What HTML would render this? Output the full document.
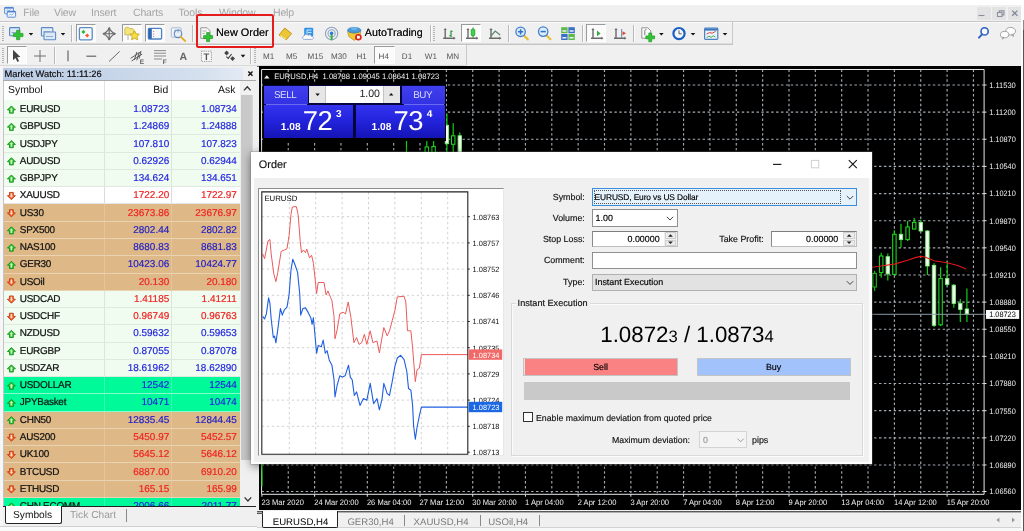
<!DOCTYPE html>
<html lang="en"><head><meta charset="utf-8"><title>MetaTrader 4 - New Order</title>
<style>
*{box-sizing:border-box;margin:0;padding:0}
html,body{width:1024px;height:531px;overflow:hidden}
body{position:relative;background:#f0f0f0;text-rendering:geometricPrecision;font-family:"Liberation Sans",sans-serif;color:#000}
.a{position:absolute}
.t{position:absolute;white-space:nowrap;line-height:1}
.d{-webkit-text-stroke:0.15px currentColor}
svg{position:absolute;left:0;top:0;overflow:visible}
svg text{font-family:"Liberation Sans",sans-serif}
</style></head><body>
<div id="app" class="a" style="left:0;top:0;width:1024px;height:531px;will-change:transform">

<!-- window top -->
<div class="a" style="left:0.00px;top:0.00px;width:1024.00px;height:5.00px;background:#fff"></div>
<div class="a" style="left:1021.00px;top:5.00px;width:3.00px;height:526.00px;background:#fbfbfb"></div>
<div class="a" style="left:1023.00px;top:20.00px;width:1.00px;height:511.00px;background:#8a8a8a"></div>
<div class="a" style="left:1023.00px;top:30.00px;width:1.00px;height:501.00px;background:#555"></div>
<!-- menu bar -->
<div class="t" style="left:23.20px;top:7.97px;font-size:10.5px;color:#a4a4a4;letter-spacing:-0.15px">File</div>
<div class="t" style="left:54.00px;top:7.97px;font-size:10.5px;color:#a4a4a4;letter-spacing:-0.15px">View</div>
<div class="t" style="left:91.00px;top:7.97px;font-size:10.5px;color:#a4a4a4;letter-spacing:-0.15px">Insert</div>
<div class="t" style="left:133.00px;top:7.97px;font-size:10.5px;color:#a4a4a4;letter-spacing:-0.15px">Charts</div>
<div class="t" style="left:178.50px;top:7.97px;font-size:10.5px;color:#a4a4a4;letter-spacing:-0.15px">Tools</div>
<div class="t" style="left:219.00px;top:7.97px;font-size:10.5px;color:#a4a4a4;letter-spacing:-0.15px">Window</div>
<div class="t" style="left:273.00px;top:7.97px;font-size:10.5px;color:#a4a4a4;letter-spacing:-0.15px">Help</div>
<svg width="1024" height="531" viewBox="0 0 1024 531">
<g fill="#f4f8fd" stroke="#5b8fd6" stroke-width="1">
<rect x="4.6" y="7.4" width="8.8" height="6.4" rx="0.6"/>
<path d="M4.6 8h8.8" stroke="#3f78c8" stroke-width="1.2"/>
<path d="M6.4 10.6l1.4-1 1.2 1 1.6-1.2" fill="none" stroke-width="0.7"/>
<rect x="7.2" y="11.2" width="8.4" height="6" rx="0.6"/>
<path d="M7.2 11.8h8.4" stroke="#3f78c8" stroke-width="1.2"/>
</g>
<path d="M9 15.4l1.4-1.4 1.4 1.2 1.8-1.6" fill="none" stroke="#5b8fd6" stroke-width="0.7"/>
</svg>
<div class="a" style="left:976.80px;top:7.00px;width:13.80px;height:13.40px;background:#e3e3e3"></div>
<div class="a" style="left:992.20px;top:7.00px;width:13.80px;height:13.40px;background:#e3e3e3"></div>
<div class="a" style="left:1007.50px;top:7.00px;width:13.60px;height:13.40px;background:#e3e3e3"></div>
<svg width="1024" height="531" viewBox="0 0 1024 531">
<g stroke="#8a8fa0" fill="none" stroke-width="1.1">
<path d="M978.5 15.5h6"/>
<path d="M997.5 12.5h4.5v4h-4.5zM999.3 12.5v-1.6h4.6v4h-1.9"/>
<path d="M1012.2 10.6l5.2 5.2M1017.4 10.6l-5.2 5.2" stroke="#7f8696" stroke-width="1.3"/>
</g></svg>
<div class="a" style="left:0.00px;top:21.00px;width:1021.00px;height:1.00px;background:#c6c6c6"></div>
<div class="a" style="left:0.00px;top:22.00px;width:1021.00px;height:1.00px;background:#fafafa"></div>
<div class="a" style="left:0.00px;top:43.20px;width:733.00px;height:1.00px;background:#dcdcdc"></div>
<div class="a" style="left:0.00px;top:44.20px;width:733.00px;height:1.00px;background:#c4c4c4"></div>
<div class="a" style="left:0.00px;top:45.20px;width:466.00px;height:1.00px;background:#fafafa"></div>
<div class="a" style="left:0.00px;top:65.00px;width:466.00px;height:1.00px;background:#dadada"></div>
<div class="a" style="left:0.00px;top:66.00px;width:257.00px;height:1.40px;background:#fbfbfb"></div>
<div class="a" style="left:732.00px;top:22.00px;width:1.00px;height:22.00px;background:#c8c8c8"></div>
<div class="a" style="left:465.50px;top:45.00px;width:1.00px;height:20.00px;background:#c8c8c8"></div>
<div class="a" style="left:2.00px;top:25.50px;width:2.40px;height:1.00px;background:#b4b4b4"></div><div class="a" style="left:2.00px;top:27.50px;width:2.40px;height:1.00px;background:#b4b4b4"></div><div class="a" style="left:2.00px;top:29.50px;width:2.40px;height:1.00px;background:#b4b4b4"></div><div class="a" style="left:2.00px;top:31.50px;width:2.40px;height:1.00px;background:#b4b4b4"></div><div class="a" style="left:2.00px;top:33.50px;width:2.40px;height:1.00px;background:#b4b4b4"></div><div class="a" style="left:2.00px;top:35.50px;width:2.40px;height:1.00px;background:#b4b4b4"></div><div class="a" style="left:2.00px;top:37.50px;width:2.40px;height:1.00px;background:#b4b4b4"></div><div class="a" style="left:2.00px;top:39.50px;width:2.40px;height:1.00px;background:#b4b4b4"></div>
<div class="a" style="left:433.00px;top:25.50px;width:2.40px;height:1.00px;background:#b4b4b4"></div><div class="a" style="left:433.00px;top:27.50px;width:2.40px;height:1.00px;background:#b4b4b4"></div><div class="a" style="left:433.00px;top:29.50px;width:2.40px;height:1.00px;background:#b4b4b4"></div><div class="a" style="left:433.00px;top:31.50px;width:2.40px;height:1.00px;background:#b4b4b4"></div><div class="a" style="left:433.00px;top:33.50px;width:2.40px;height:1.00px;background:#b4b4b4"></div><div class="a" style="left:433.00px;top:35.50px;width:2.40px;height:1.00px;background:#b4b4b4"></div><div class="a" style="left:433.00px;top:37.50px;width:2.40px;height:1.00px;background:#b4b4b4"></div><div class="a" style="left:433.00px;top:39.50px;width:2.40px;height:1.00px;background:#b4b4b4"></div>
<div class="a" style="left:2.00px;top:47.50px;width:2.40px;height:1.00px;background:#b4b4b4"></div><div class="a" style="left:2.00px;top:49.50px;width:2.40px;height:1.00px;background:#b4b4b4"></div><div class="a" style="left:2.00px;top:51.50px;width:2.40px;height:1.00px;background:#b4b4b4"></div><div class="a" style="left:2.00px;top:53.50px;width:2.40px;height:1.00px;background:#b4b4b4"></div><div class="a" style="left:2.00px;top:55.50px;width:2.40px;height:1.00px;background:#b4b4b4"></div><div class="a" style="left:2.00px;top:57.50px;width:2.40px;height:1.00px;background:#b4b4b4"></div><div class="a" style="left:2.00px;top:59.50px;width:2.40px;height:1.00px;background:#b4b4b4"></div><div class="a" style="left:2.00px;top:61.50px;width:2.40px;height:1.00px;background:#b4b4b4"></div>
<div class="a" style="left:253.50px;top:47.50px;width:2.40px;height:1.00px;background:#b4b4b4"></div><div class="a" style="left:253.50px;top:49.50px;width:2.40px;height:1.00px;background:#b4b4b4"></div><div class="a" style="left:253.50px;top:51.50px;width:2.40px;height:1.00px;background:#b4b4b4"></div><div class="a" style="left:253.50px;top:53.50px;width:2.40px;height:1.00px;background:#b4b4b4"></div><div class="a" style="left:253.50px;top:55.50px;width:2.40px;height:1.00px;background:#b4b4b4"></div><div class="a" style="left:253.50px;top:57.50px;width:2.40px;height:1.00px;background:#b4b4b4"></div><div class="a" style="left:253.50px;top:59.50px;width:2.40px;height:1.00px;background:#b4b4b4"></div><div class="a" style="left:253.50px;top:61.50px;width:2.40px;height:1.00px;background:#b4b4b4"></div>
<div class="a" style="left:71.20px;top:25.00px;width:1.00px;height:17.00px;background:#b9b9b9"></div><div class="a" style="left:72.20px;top:25.00px;width:1.00px;height:17.00px;background:#fbfbfb"></div>
<div class="a" style="left:192.20px;top:25.00px;width:1.00px;height:17.00px;background:#b9b9b9"></div><div class="a" style="left:193.20px;top:25.00px;width:1.00px;height:17.00px;background:#fbfbfb"></div>
<div class="a" style="left:429.60px;top:25.00px;width:1.00px;height:17.00px;background:#b9b9b9"></div><div class="a" style="left:430.60px;top:25.00px;width:1.00px;height:17.00px;background:#fbfbfb"></div>
<div class="a" style="left:508.40px;top:25.00px;width:1.00px;height:17.00px;background:#b9b9b9"></div><div class="a" style="left:509.40px;top:25.00px;width:1.00px;height:17.00px;background:#fbfbfb"></div>
<div class="a" style="left:582.40px;top:25.00px;width:1.00px;height:17.00px;background:#b9b9b9"></div><div class="a" style="left:583.40px;top:25.00px;width:1.00px;height:17.00px;background:#fbfbfb"></div>
<div class="a" style="left:633.20px;top:25.00px;width:1.00px;height:17.00px;background:#b9b9b9"></div><div class="a" style="left:634.20px;top:25.00px;width:1.00px;height:17.00px;background:#fbfbfb"></div>
<div class="a" style="left:54.00px;top:47.00px;width:1.00px;height:17.00px;background:#b9b9b9"></div><div class="a" style="left:55.00px;top:47.00px;width:1.00px;height:17.00px;background:#fbfbfb"></div>
<div class="a" style="left:250.20px;top:47.00px;width:1.00px;height:17.00px;background:#b9b9b9"></div><div class="a" style="left:251.20px;top:47.00px;width:1.00px;height:17.00px;background:#fbfbfb"></div>
<div class="a" style="left:76.00px;top:24.20px;width:19.80px;height:18.20px;background:#fbfbfb;border-left:1px solid #9a9a9a;border-top:1px solid #9a9a9a;border-right:1px solid #fff;border-bottom:1px solid #fff"></div>
<div class="a" style="left:122.00px;top:24.20px;width:20.40px;height:18.20px;background:#fbfbfb;border-left:1px solid #9a9a9a;border-top:1px solid #9a9a9a;border-right:1px solid #fff;border-bottom:1px solid #fff"></div>
<div class="a" style="left:145.20px;top:24.20px;width:20.20px;height:18.20px;background:#fbfbfb;border-left:1px solid #9a9a9a;border-top:1px solid #9a9a9a;border-right:1px solid #fff;border-bottom:1px solid #fff"></div>
<div class="a" style="left:461.20px;top:24.20px;width:20.20px;height:18.20px;background:#fbfbfb;border-left:1px solid #9a9a9a;border-top:1px solid #9a9a9a;border-right:1px solid #fff;border-bottom:1px solid #fff"></div>
<div class="a" style="left:586.20px;top:24.20px;width:20.20px;height:18.20px;background:#fbfbfb;border-left:1px solid #9a9a9a;border-top:1px solid #9a9a9a;border-right:1px solid #fff;border-bottom:1px solid #fff"></div>
<div class="a" style="left:7.00px;top:46.40px;width:20.20px;height:18.00px;background:#fbfbfb;border-left:1px solid #9a9a9a;border-top:1px solid #9a9a9a;border-right:1px solid #fff;border-bottom:1px solid #fff"></div>
<div class="a" style="left:374.20px;top:46.40px;width:20.40px;height:18.00px;background:#fbfbfb;border-left:1px solid #9a9a9a;border-top:1px solid #9a9a9a;border-right:1px solid #fff;border-bottom:1px solid #fff"></div>
<!-- toolbar icons -->
<svg width="1024" height="531" viewBox="0 0 1024 531">
<rect x="9.6" y="27.6" width="10" height="8.2" rx="0.8" fill="#dfeaf6" stroke="#4f86c2" stroke-width="1.1"/>
<path d="M11.5 32.5h5" stroke="#7a9cc4" stroke-width="0.8"/>
<path d="M16.6 30.3h3.2v3.1h3.2v3.2h-3.2v3.1h-3.2v-3.1h-3.2v-3.2h3.2z" fill="#2fc433" stroke="#1f9a25" stroke-width="0.7"/>
<path d="M28.7 33.0h4.6l-2.3 2.6z" fill="#111"/>
<rect x="41.4" y="27.6" width="11.4" height="8.4" rx="0.8" fill="#e4edf7" stroke="#5b8bc4" stroke-width="1.1"/>
<rect x="44" y="32" width="11.6" height="7.8" rx="0.8" fill="#dce8f5" stroke="#5b8bc4" stroke-width="1.1"/>
<path d="M43.5 31.5h6.5M46 36.5h7" stroke="#7a9cc4" stroke-width="0.8"/>
<path d="M60.7 33.0h4.6l-2.3 2.6z" fill="#111"/>
<rect x="79.4" y="27.6" width="12.8" height="12.2" rx="1.2" fill="#f7fafd" stroke="#5b8bc4" stroke-width="1.3"/>
<path d="M83.4 29.8l2.1 2.1-2.1 2.1-2.1-2.1z" fill="#35b535"/>
<path d="M87.2 33.4l2.1 2.1-2.1 2.1-2.1-2.1z" fill="#ef5a2a"/>
<g stroke="#6a6a6a" fill="none" stroke-width="1.2"><path d="M109.2 29l4.8 4.8-4.8 4.8-4.8-4.8z"/><path d="M109.2 27.6v12.4M103 33.8h12.4" stroke-width="1.1"/></g>
<path d="M109.2 27l1.8 2.2h-3.6zM109.2 40.6l1.8-2.2h-3.6zM102.4 33.8l2.2-1.8v3.6zM116 33.8l-2.2-1.8v3.6z" fill="#6a6a6a"/>
<path d="M124.8 29c0-1 .6-1.6 1.6-1.6h2.2l1 1.2h2.6c1 0 1.6.6 1.6 1.6v4.6h-9z" fill="#f3e47c" stroke="#c8b040" stroke-width="0.8"/>
<path d="M128 35v5" stroke="#aab4c8" stroke-width="1"/>
<path d="M134.6 30.8l1.5 3 3.3.4-2.4 2.3.6 3.3-3-1.6-3 1.6.6-3.3-2.4-2.3 3.3-.4z" fill="#f7dc4a" stroke="#c9a91a" stroke-width="0.9"/>
<rect x="148.4" y="28.4" width="13.2" height="10.6" rx="1" fill="#f5f8fc" stroke="#4c82c0" stroke-width="1.3"/>
<rect x="148.6" y="28.6" width="3.2" height="10.2" fill="#2f66b4"/>
<path d="M153 31.5h1.2M153 34h1.2M153 36.4h1.2" stroke="#d06060" stroke-width="0.8"/>
<rect x="171.4" y="27.8" width="9.6" height="9.4" rx="0.8" fill="#f4f7fb" stroke="#9fb2cc" stroke-width="0.9"/>
<circle cx="178" cy="33.8" r="3.8" fill="#e6eef8" fill-opacity="0.8" stroke="#5f86b8" stroke-width="1.1"/>
<path d="M180.8 36.8l4.4 4.2" stroke="#e0b020" stroke-width="1.8" stroke-linecap="round"/>
<path d="M175 29.5v3M178 29.5v3" stroke="#5f86b8" stroke-width="0.8"/>
<path d="M200.8 27.8h6.2l3 3v7.6h-9.2z" fill="#fbfbfb" stroke="#8a8a8a" stroke-width="0.9"/>
<path d="M202.5 31h4M202.5 33.4h2.5" stroke="#9a9a9a" stroke-width="0.8"/>
<path d="M206.6 32.6h3v3h3v3h-3v3h-3v-3h-3v-3h3z" fill="#2fc433" stroke="#1f9a25" stroke-width="0.7"/>
<path d="M279 35l5.8-7 6.8 5.6-5.4 6.2z" fill="#ecc636" stroke="#b8901a" stroke-width="0.9"/>
<path d="M280.2 35.6l5.4 3.6" stroke="#fff2a8" stroke-width="1"/>
<rect x="304.2" y="27.8" width="9" height="8.6" rx="1" fill="#2f93e6"/>
<path d="M307 30h4.5M308 32.4h3.5M307 30v5" stroke="#d8ecfb" stroke-width="1"/>
<path d="M304.6 39.4c-2.6 0-2.8-3.2-.4-3.4.4-1.8 3-2.2 3.8-.6 1-1.4 3.4-.8 3.4 1 2.6-.2 2.8 3 0 3z" fill="#fdfdff" stroke="#8aa2c8" stroke-width="0.9"/>
<g fill="none" stroke="#8ea4c0" stroke-width="1.1"><circle cx="331.6" cy="33.4" r="6.2"/><circle cx="331.6" cy="33.4" r="3.6"/></g>
<path d="M331.6 33.4v7" stroke="#3fae3f" stroke-width="2"/>
<circle cx="331.6" cy="33.2" r="1.7" fill="#2a7ad0"/>
<path d="M347.6 31.4l6.6 1.6 6.6-1.6-1.2 5-5.4 4-5.4-4z" fill="#f1c736" stroke="#b38d1c" stroke-width="0.7"/>
<ellipse cx="354.2" cy="30.2" rx="6.6" ry="2.8" fill="#4a9ad8" stroke="#2f78b8" stroke-width="0.7"/>
<ellipse cx="354.2" cy="28.6" rx="3.2" ry="1.6" fill="#6ab4ea"/>
<circle cx="358.4" cy="37.2" r="3.3" fill="#d8261c"/><rect x="357" y="35.8" width="2.8" height="2.8" fill="#fff"/>
<path d="M445.2 29.4v9.4M443.2 38.2h11" stroke="#6a6a6a" stroke-width="1.4" fill="none"/><path d="M445.2 28l1.6 2h-3.2zM455.59999999999997 38.2l-2 1.6v-3.2z" fill="#6a6a6a"/>
<path d="M451 30.4v6.6M451 31.4h1.6M449.4 35.6h1.6" stroke="#2e9e3e" stroke-width="1.3" fill="none"/>
<path d="M468 29.4v9.4M466 38.2h11" stroke="#6a6a6a" stroke-width="1.4" fill="none"/><path d="M468 28l1.6 2h-3.2zM478.4 38.2l-2 1.6v-3.2z" fill="#6a6a6a"/>
<path d="M473 27.4v10.4" stroke="#2e9e3e" stroke-width="1"/><rect x="471.2" y="29.2" width="3.6" height="6.6" rx="1" fill="#3fd24a" stroke="#239a30" stroke-width="0.8"/>
<path d="M491 29.4v9.4M489 38.2h11" stroke="#6a6a6a" stroke-width="1.4" fill="none"/><path d="M491 28l1.6 2h-3.2zM501.4 38.2l-2 1.6v-3.2z" fill="#6a6a6a"/>
<path d="M491 36l4.2-5 5 4" stroke="#5a8a6a" stroke-width="1.2" fill="none"/>
<path d="M524 35.6l3.8 3.8" stroke="#e3c23a" stroke-width="2.2" stroke-linecap="round"/>
<circle cx="520.6" cy="31.8" r="4.7" fill="#dcecfb" stroke="#3f7fcc" stroke-width="1.3"/><path d="M518 31.8h5.2M520.6 29.2v5.2" stroke="#2f6fc0" stroke-width="1.5"/>
<path d="M546.6 35.4l3.8 3.8" stroke="#e3c23a" stroke-width="2.2" stroke-linecap="round"/>
<circle cx="543.2" cy="31.6" r="4.7" fill="#dcecfb" stroke="#3f7fcc" stroke-width="1.3"/><path d="M540.6 31.6h5.2" stroke="#2f6fc0" stroke-width="1.5"/>
<rect x="561.2" y="27.2" width="6.4" height="6" fill="#5cb84a"/><rect x="568.4" y="27.2" width="6.4" height="6" fill="#3b6fc4"/>
<rect x="561.2" y="34" width="6.4" height="6" fill="#3b6fc4"/><rect x="568.4" y="34" width="6.4" height="6" fill="#5cb84a"/>
<path d="M562.4 31h4M569.6 31h4M562.4 37.8h4M569.6 37.8h4" stroke="#e6f0ff" stroke-width="1.6"/>
<path d="M593 29.4v9.4M591 38.2h11" stroke="#6a6a6a" stroke-width="1.4" fill="none"/><path d="M593 28l1.6 2h-3.2zM603.4 38.2l-2 1.6v-3.2z" fill="#6a6a6a"/>
<path d="M597 30.6l3.6 2.8-3.6 2.8z" fill="#2fae3f"/>
<path d="M616 29.4v9.4M614 38.2h11" stroke="#6a6a6a" stroke-width="1.4" fill="none"/><path d="M616 28l1.6 2h-3.2zM626.4 38.2l-2 1.6v-3.2z" fill="#6a6a6a"/>
<path d="M621.6 29v9" stroke="#7a94b8" stroke-width="1.2"/><path d="M626 33.2l-3.4-2v4z" fill="#d8482a"/>
<path d="M641.8 27.8h6l3 3v7.4h-9z" fill="#fbfbfb" stroke="#8a8a8a" stroke-width="0.9"/>
<path d="M646.4 29.4c-1.6 0-1.6 1.2-1.6 2.4v3.4" stroke="#6a6a6a" stroke-width="0.9" fill="none"/>
<path d="M648.8 33h2.9v2.9h2.9v2.9h-2.9v2.9h-2.9v-2.9h-2.9v-2.9h2.9z" fill="#2fc433" stroke="#1f9a25" stroke-width="0.7"/>
<path d="M659.1 33.0h4.6l-2.3 2.6z" fill="#111"/>
<circle cx="679" cy="33.6" r="5.6" fill="#f4f8fd" stroke="#1c5fc2" stroke-width="2.2"/><path d="M679 30.4v3.4h2.6" stroke="#555" stroke-width="1" fill="none"/>
<path d="M690.7 33.0h4.6l-2.3 2.6z" fill="#111"/>
<rect x="704.6" y="28.2" width="13.2" height="11.2" rx="0.8" fill="#eaf1fa" stroke="#4c82c0" stroke-width="1.2"/><rect x="705" y="28.6" width="12.4" height="2" fill="#3f78c0"/>
<path d="M706.6 34l3-1.4 2.6.6 3.4-1.8" stroke="#d84a3a" stroke-width="1" fill="none"/><path d="M706.6 37.6l2.4-1.4 2 1.2 2.2-1.6 2.2 1.2" stroke="#4aa84a" stroke-width="1" fill="none"/>
<path d="M722.7 33.0h4.6l-2.3 2.6z" fill="#111"/>
<circle cx="984.6" cy="31.4" r="3.6" fill="#f4f8ff" stroke="#2f5fc0" stroke-width="1.6"/><path d="M982 34.4l-3 3.2" stroke="#2f5fc0" stroke-width="2" stroke-linecap="round"/>
<g fill="#fdfdfd" stroke="#9a9a9a" stroke-width="0.9"><ellipse cx="1010.6" cy="31.2" rx="5" ry="3.8"/><path d="M1011.6 34.6l1.6 2 .4-2.4z"/><ellipse cx="1004.6" cy="34.6" rx="4.2" ry="3.2"/><path d="M1002.6 37.2l-.4 2 2-1.6z"/></g>
<path d="M13 49.8v10.4l2.5-2.3 1.9 4 1.7-.8-1.9-3.9 3.2-.2z" fill="#444"/>
<path d="M40 50v12M34 56h12" stroke="#707070" stroke-width="1"/>
<path d="M68 50.6v10.6" stroke="#666" stroke-width="1.2"/>
<path d="M86.4 56.2h9.8" stroke="#666" stroke-width="1.2"/>
<path d="M109 61.6l10.6-10.2" stroke="#666" stroke-width="1"/>
<path d="M130.6 58.4l10.6-7M131.6 61l10.6-7M134.4 60l2.4-8M136.8 60.4l2.4-8M139 58.6l2-7" stroke="#5a5a5a" stroke-width="1" fill="none"/>
<text x="139.8" y="64" font-size="6.5" font-weight="bold" fill="#5a5a5a">E</text>
<path d="M154 50.6h12M154 53.2h12M154 56h12M154 59h8" stroke="#8a8a8a" stroke-width="1"/>
<text x="162.8" y="64" font-size="6.5" font-weight="bold" fill="#5a5a5a">F</text>
<text x="179.6" y="60.2" font-size="10.5" font-weight="bold" fill="#666">A</text>
<rect x="201.4" y="51.2" width="10" height="10.2" fill="#f8f8f8" stroke="#8a8a8a" stroke-width="0.9" stroke-dasharray="1.2 1"/>
<text x="203.4" y="60.2" font-size="9.5" font-weight="bold" fill="#555">T</text>
<path d="M226.6 50.6l2.4 2.4-2.4 2.4-2.4-2.4zM232.6 56.2l2.4 2.4-2.4 2.4-2.4-2.4z" fill="#444"/><path d="M226.4 56.6l1.8 1.8 3.4-4.4" stroke="#444" stroke-width="1.2" fill="none"/>
<path d="M240.7 54.8h4.6l-2.3 2.6z" fill="#111"/>
</svg>
<div class="t" style="left:216.00px;top:27.58px;font-size:10.9px;color:#111;text-shadow:0 0 0.25px #333">New Order</div>
<div class="t" style="left:364.80px;top:27.66px;font-size:10.72px;color:#111;text-shadow:0 0 0.25px #333">AutoTrading</div>
<div class="t" style="left:263.00px;top:53.24px;font-size:8.1px;color:#555;">M1</div>
<div class="t" style="left:286.00px;top:53.24px;font-size:8.1px;color:#555;">M5</div>
<div class="t" style="left:307.40px;top:53.24px;font-size:8.1px;color:#555;">M15</div>
<div class="t" style="left:331.00px;top:53.24px;font-size:8.1px;color:#555;">M30</div>
<div class="t" style="left:356.40px;top:53.24px;font-size:8.1px;color:#555;">H1</div>
<div class="t" style="left:378.60px;top:53.24px;font-size:8.1px;color:#555;">H4</div>
<div class="t" style="left:401.80px;top:53.24px;font-size:8.1px;color:#555;">D1</div>
<div class="t" style="left:424.80px;top:53.24px;font-size:8.1px;color:#555;">W1</div>
<div class="t" style="left:446.60px;top:53.24px;font-size:8.1px;color:#555;">MN</div>
<div class="a" style="left:196.40px;top:14.20px;width:77.80px;height:34.20px;border:2.1px solid #e51c1c;border-radius:2.5px"></div>
<!-- market watch -->
<div class="a" style="left:0.00px;top:66.00px;width:257.00px;height:465.00px;background:#f0f0f0"></div>
<div class="a" style="left:0.00px;top:66.00px;width:3.00px;height:462.00px;background:#f6f6f6"></div>
<div class="a" style="left:3.00px;top:67.90px;width:240.00px;height:11.90px;background:linear-gradient(90deg,#b9cbe4 0%,#c6d5e9 45%,#d6e1ef 85%,#e3eaf4 100%)"></div>
<div class="t" style="left:4.60px;top:70.06px;font-size:9.3px;color:#0a0a0a;-webkit-text-stroke:0.15px #0a0a0a">Market Watch: 11:11:26</div>
<svg width="1024" height="531" viewBox="0 0 1024 531"><path d="M248.3 71.5l4.2 4.2M252.5 71.5l-4.2 4.2" stroke="#111" stroke-width="1.4"/></svg>
<div class="a" style="left:2.60px;top:80.00px;width:253.40px;height:426.00px;background:#fff;border-left:1px solid #c4c4c4"></div>
<div class="a" style="left:3.00px;top:80.00px;width:253.00px;height:1.00px;background:#a8a8a8"></div>
<div class="t" style="left:8.00px;top:86.22px;font-size:10.4px;color:#111;">Symbol</div>
<div class="t" style="right:855.80px;top:86.22px;font-size:10.4px;color:#111;">Bid</div>
<div class="t" style="right:788.60px;top:86.22px;font-size:10.4px;color:#111;">Ask</div>
<div class="a" style="left:4.00px;top:99.50px;width:237.00px;height:1.00px;background:#e2e2e2"></div>
<div class="a" style="left:4px;top:100.40px;width:236.4px;height:17.56px;background:#effcef;overflow:hidden">
<div class="t" style="left:15.8px;top:4.67px;font-size:9.95px;color:#111;letter-spacing:-0.25px;-webkit-text-stroke:0.22px #111">EURUSD</div>
<div class="t" style="right:71.2px;top:4.67px;font-size:9.95px;color:#2222e0;-webkit-text-stroke:0.18px #2222e0">1.08723</div>
<div class="t" style="right:3.6px;top:4.67px;font-size:9.95px;color:#2222e0;-webkit-text-stroke:0.18px #2222e0">1.08734</div>
<div class="a" style="left:99.8px;top:0;width:1px;height:100%;background:#dbe6db"></div><div class="a" style="left:166.8px;top:0;width:1px;height:100%;background:#dbe6db"></div>
</div>
<div class="a" style="left:4px;top:117.66px;width:236.4px;height:17.56px;background:#effcef;overflow:hidden">
<div class="t" style="left:15.8px;top:4.67px;font-size:9.95px;color:#111;letter-spacing:-0.25px;-webkit-text-stroke:0.22px #111">GBPUSD</div>
<div class="t" style="right:71.2px;top:4.67px;font-size:9.95px;color:#2222e0;-webkit-text-stroke:0.18px #2222e0">1.24869</div>
<div class="t" style="right:3.6px;top:4.67px;font-size:9.95px;color:#2222e0;-webkit-text-stroke:0.18px #2222e0">1.24888</div>
<div class="a" style="left:99.8px;top:0;width:1px;height:100%;background:#dbe6db"></div><div class="a" style="left:166.8px;top:0;width:1px;height:100%;background:#dbe6db"></div>
</div>
<div class="a" style="left:4px;top:134.92px;width:236.4px;height:17.56px;background:#effcef;overflow:hidden">
<div class="t" style="left:15.8px;top:4.67px;font-size:9.95px;color:#111;letter-spacing:-0.25px;-webkit-text-stroke:0.22px #111">USDJPY</div>
<div class="t" style="right:71.2px;top:4.67px;font-size:9.95px;color:#2222e0;-webkit-text-stroke:0.18px #2222e0">107.810</div>
<div class="t" style="right:3.6px;top:4.67px;font-size:9.95px;color:#2222e0;-webkit-text-stroke:0.18px #2222e0">107.823</div>
<div class="a" style="left:99.8px;top:0;width:1px;height:100%;background:#dbe6db"></div><div class="a" style="left:166.8px;top:0;width:1px;height:100%;background:#dbe6db"></div>
</div>
<div class="a" style="left:4px;top:152.18px;width:236.4px;height:17.56px;background:#effcef;overflow:hidden">
<div class="t" style="left:15.8px;top:4.67px;font-size:9.95px;color:#111;letter-spacing:-0.25px;-webkit-text-stroke:0.22px #111">AUDUSD</div>
<div class="t" style="right:71.2px;top:4.67px;font-size:9.95px;color:#2222e0;-webkit-text-stroke:0.18px #2222e0">0.62926</div>
<div class="t" style="right:3.6px;top:4.67px;font-size:9.95px;color:#2222e0;-webkit-text-stroke:0.18px #2222e0">0.62944</div>
<div class="a" style="left:99.8px;top:0;width:1px;height:100%;background:#dbe6db"></div><div class="a" style="left:166.8px;top:0;width:1px;height:100%;background:#dbe6db"></div>
</div>
<div class="a" style="left:4px;top:169.44px;width:236.4px;height:17.56px;background:#effcef;overflow:hidden">
<div class="t" style="left:15.8px;top:4.67px;font-size:9.95px;color:#111;letter-spacing:-0.25px;-webkit-text-stroke:0.22px #111">GBPJPY</div>
<div class="t" style="right:71.2px;top:4.67px;font-size:9.95px;color:#2222e0;-webkit-text-stroke:0.18px #2222e0">134.624</div>
<div class="t" style="right:3.6px;top:4.67px;font-size:9.95px;color:#2222e0;-webkit-text-stroke:0.18px #2222e0">134.651</div>
<div class="a" style="left:99.8px;top:0;width:1px;height:100%;background:#dbe6db"></div><div class="a" style="left:166.8px;top:0;width:1px;height:100%;background:#dbe6db"></div>
</div>
<div class="a" style="left:4px;top:186.70px;width:236.4px;height:17.56px;background:#ffffff;overflow:hidden">
<div class="t" style="left:15.8px;top:4.67px;font-size:9.95px;color:#111;letter-spacing:-0.25px;-webkit-text-stroke:0.22px #111">XAUUSD</div>
<div class="t" style="right:71.2px;top:4.67px;font-size:9.95px;color:#f02020;-webkit-text-stroke:0.18px #f02020">1722.20</div>
<div class="t" style="right:3.6px;top:4.67px;font-size:9.95px;color:#f02020;-webkit-text-stroke:0.18px #f02020">1722.97</div>
<div class="a" style="left:99.8px;top:0;width:1px;height:100%;background:#dadae0"></div><div class="a" style="left:166.8px;top:0;width:1px;height:100%;background:#dadae0"></div>
</div>
<div class="a" style="left:4px;top:203.96px;width:236.4px;height:17.56px;background:#deb887;overflow:hidden">
<div class="t" style="left:15.8px;top:4.67px;font-size:9.95px;color:#111;letter-spacing:-0.25px;-webkit-text-stroke:0.22px #111">US30</div>
<div class="t" style="right:71.2px;top:4.67px;font-size:9.95px;color:#f02020;-webkit-text-stroke:0.18px #f02020">23673.86</div>
<div class="t" style="right:3.6px;top:4.67px;font-size:9.95px;color:#f02020;-webkit-text-stroke:0.18px #f02020">23676.97</div>
<div class="a" style="left:99.8px;top:0;width:1px;height:100%;background:#e4c49c"></div><div class="a" style="left:166.8px;top:0;width:1px;height:100%;background:#e4c49c"></div>
</div>
<div class="a" style="left:4px;top:221.22px;width:236.4px;height:17.56px;background:#deb887;overflow:hidden">
<div class="t" style="left:15.8px;top:4.67px;font-size:9.95px;color:#111;letter-spacing:-0.25px;-webkit-text-stroke:0.22px #111">SPX500</div>
<div class="t" style="right:71.2px;top:4.67px;font-size:9.95px;color:#1c1cc8;-webkit-text-stroke:0.18px #1c1cc8">2802.44</div>
<div class="t" style="right:3.6px;top:4.67px;font-size:9.95px;color:#1c1cc8;-webkit-text-stroke:0.18px #1c1cc8">2802.82</div>
<div class="a" style="left:99.8px;top:0;width:1px;height:100%;background:#e4c49c"></div><div class="a" style="left:166.8px;top:0;width:1px;height:100%;background:#e4c49c"></div>
</div>
<div class="a" style="left:4px;top:238.48px;width:236.4px;height:17.56px;background:#deb887;overflow:hidden">
<div class="t" style="left:15.8px;top:4.67px;font-size:9.95px;color:#111;letter-spacing:-0.25px;-webkit-text-stroke:0.22px #111">NAS100</div>
<div class="t" style="right:71.2px;top:4.67px;font-size:9.95px;color:#1c1cc8;-webkit-text-stroke:0.18px #1c1cc8">8680.83</div>
<div class="t" style="right:3.6px;top:4.67px;font-size:9.95px;color:#1c1cc8;-webkit-text-stroke:0.18px #1c1cc8">8681.83</div>
<div class="a" style="left:99.8px;top:0;width:1px;height:100%;background:#e4c49c"></div><div class="a" style="left:166.8px;top:0;width:1px;height:100%;background:#e4c49c"></div>
</div>
<div class="a" style="left:4px;top:255.74px;width:236.4px;height:17.56px;background:#deb887;overflow:hidden">
<div class="t" style="left:15.8px;top:4.67px;font-size:9.95px;color:#111;letter-spacing:-0.25px;-webkit-text-stroke:0.22px #111">GER30</div>
<div class="t" style="right:71.2px;top:4.67px;font-size:9.95px;color:#1c1cc8;-webkit-text-stroke:0.18px #1c1cc8">10423.06</div>
<div class="t" style="right:3.6px;top:4.67px;font-size:9.95px;color:#1c1cc8;-webkit-text-stroke:0.18px #1c1cc8">10424.77</div>
<div class="a" style="left:99.8px;top:0;width:1px;height:100%;background:#e4c49c"></div><div class="a" style="left:166.8px;top:0;width:1px;height:100%;background:#e4c49c"></div>
</div>
<div class="a" style="left:4px;top:273.00px;width:236.4px;height:17.56px;background:#deb887;overflow:hidden">
<div class="t" style="left:15.8px;top:4.67px;font-size:9.95px;color:#111;letter-spacing:-0.25px;-webkit-text-stroke:0.22px #111">USOil</div>
<div class="t" style="right:71.2px;top:4.67px;font-size:9.95px;color:#f02020;-webkit-text-stroke:0.18px #f02020">20.130</div>
<div class="t" style="right:3.6px;top:4.67px;font-size:9.95px;color:#f02020;-webkit-text-stroke:0.18px #f02020">20.180</div>
<div class="a" style="left:99.8px;top:0;width:1px;height:100%;background:#e4c49c"></div><div class="a" style="left:166.8px;top:0;width:1px;height:100%;background:#e4c49c"></div>
</div>
<div class="a" style="left:4px;top:290.26px;width:236.4px;height:17.56px;background:#effcef;overflow:hidden">
<div class="t" style="left:15.8px;top:4.67px;font-size:9.95px;color:#111;letter-spacing:-0.25px;-webkit-text-stroke:0.22px #111">USDCAD</div>
<div class="t" style="right:71.2px;top:4.67px;font-size:9.95px;color:#f02020;-webkit-text-stroke:0.18px #f02020">1.41185</div>
<div class="t" style="right:3.6px;top:4.67px;font-size:9.95px;color:#f02020;-webkit-text-stroke:0.18px #f02020">1.41211</div>
<div class="a" style="left:99.8px;top:0;width:1px;height:100%;background:#dbe6db"></div><div class="a" style="left:166.8px;top:0;width:1px;height:100%;background:#dbe6db"></div>
</div>
<div class="a" style="left:4px;top:307.52px;width:236.4px;height:17.56px;background:#effcef;overflow:hidden">
<div class="t" style="left:15.8px;top:4.67px;font-size:9.95px;color:#111;letter-spacing:-0.25px;-webkit-text-stroke:0.22px #111">USDCHF</div>
<div class="t" style="right:71.2px;top:4.67px;font-size:9.95px;color:#f02020;-webkit-text-stroke:0.18px #f02020">0.96749</div>
<div class="t" style="right:3.6px;top:4.67px;font-size:9.95px;color:#f02020;-webkit-text-stroke:0.18px #f02020">0.96763</div>
<div class="a" style="left:99.8px;top:0;width:1px;height:100%;background:#dbe6db"></div><div class="a" style="left:166.8px;top:0;width:1px;height:100%;background:#dbe6db"></div>
</div>
<div class="a" style="left:4px;top:324.78px;width:236.4px;height:17.56px;background:#effcef;overflow:hidden">
<div class="t" style="left:15.8px;top:4.67px;font-size:9.95px;color:#111;letter-spacing:-0.25px;-webkit-text-stroke:0.22px #111">NZDUSD</div>
<div class="t" style="right:71.2px;top:4.67px;font-size:9.95px;color:#2222e0;-webkit-text-stroke:0.18px #2222e0">0.59632</div>
<div class="t" style="right:3.6px;top:4.67px;font-size:9.95px;color:#2222e0;-webkit-text-stroke:0.18px #2222e0">0.59653</div>
<div class="a" style="left:99.8px;top:0;width:1px;height:100%;background:#dbe6db"></div><div class="a" style="left:166.8px;top:0;width:1px;height:100%;background:#dbe6db"></div>
</div>
<div class="a" style="left:4px;top:342.04px;width:236.4px;height:17.56px;background:#effcef;overflow:hidden">
<div class="t" style="left:15.8px;top:4.67px;font-size:9.95px;color:#111;letter-spacing:-0.25px;-webkit-text-stroke:0.22px #111">EURGBP</div>
<div class="t" style="right:71.2px;top:4.67px;font-size:9.95px;color:#2222e0;-webkit-text-stroke:0.18px #2222e0">0.87055</div>
<div class="t" style="right:3.6px;top:4.67px;font-size:9.95px;color:#2222e0;-webkit-text-stroke:0.18px #2222e0">0.87078</div>
<div class="a" style="left:99.8px;top:0;width:1px;height:100%;background:#dbe6db"></div><div class="a" style="left:166.8px;top:0;width:1px;height:100%;background:#dbe6db"></div>
</div>
<div class="a" style="left:4px;top:359.30px;width:236.4px;height:17.56px;background:#effcef;overflow:hidden">
<div class="t" style="left:15.8px;top:4.67px;font-size:9.95px;color:#111;letter-spacing:-0.25px;-webkit-text-stroke:0.22px #111">USDZAR</div>
<div class="t" style="right:71.2px;top:4.67px;font-size:9.95px;color:#2222e0;-webkit-text-stroke:0.18px #2222e0">18.61962</div>
<div class="t" style="right:3.6px;top:4.67px;font-size:9.95px;color:#2222e0;-webkit-text-stroke:0.18px #2222e0">18.62890</div>
<div class="a" style="left:99.8px;top:0;width:1px;height:100%;background:#dbe6db"></div><div class="a" style="left:166.8px;top:0;width:1px;height:100%;background:#dbe6db"></div>
</div>
<div class="a" style="left:4px;top:376.56px;width:236.4px;height:17.56px;background:#00fa9a;overflow:hidden">
<div class="t" style="left:15.8px;top:4.67px;font-size:9.95px;color:#111;letter-spacing:-0.25px;-webkit-text-stroke:0.22px #111">USDOLLAR</div>
<div class="t" style="right:71.2px;top:4.67px;font-size:9.95px;color:#2222e0;-webkit-text-stroke:0.18px #2222e0">12542</div>
<div class="t" style="right:3.6px;top:4.67px;font-size:9.95px;color:#2222e0;-webkit-text-stroke:0.18px #2222e0">12544</div>
<div class="a" style="left:99.8px;top:0;width:1px;height:100%;background:#3afbb2"></div><div class="a" style="left:166.8px;top:0;width:1px;height:100%;background:#3afbb2"></div>
</div>
<div class="a" style="left:4px;top:393.82px;width:236.4px;height:17.56px;background:#00fa9a;overflow:hidden">
<div class="t" style="left:15.8px;top:4.67px;font-size:9.95px;color:#111;letter-spacing:-0.25px;-webkit-text-stroke:0.22px #111">JPYBasket</div>
<div class="t" style="right:71.2px;top:4.67px;font-size:9.95px;color:#2222e0;-webkit-text-stroke:0.18px #2222e0">10471</div>
<div class="t" style="right:3.6px;top:4.67px;font-size:9.95px;color:#2222e0;-webkit-text-stroke:0.18px #2222e0">10474</div>
<div class="a" style="left:99.8px;top:0;width:1px;height:100%;background:#3afbb2"></div><div class="a" style="left:166.8px;top:0;width:1px;height:100%;background:#3afbb2"></div>
</div>
<div class="a" style="left:4px;top:411.08px;width:236.4px;height:17.56px;background:#deb887;overflow:hidden">
<div class="t" style="left:15.8px;top:4.67px;font-size:9.95px;color:#111;letter-spacing:-0.25px;-webkit-text-stroke:0.22px #111">CHN50</div>
<div class="t" style="right:71.2px;top:4.67px;font-size:9.95px;color:#1c1cc8;-webkit-text-stroke:0.18px #1c1cc8">12835.45</div>
<div class="t" style="right:3.6px;top:4.67px;font-size:9.95px;color:#1c1cc8;-webkit-text-stroke:0.18px #1c1cc8">12844.45</div>
<div class="a" style="left:99.8px;top:0;width:1px;height:100%;background:#e4c49c"></div><div class="a" style="left:166.8px;top:0;width:1px;height:100%;background:#e4c49c"></div>
</div>
<div class="a" style="left:4px;top:428.34px;width:236.4px;height:17.56px;background:#deb887;overflow:hidden">
<div class="t" style="left:15.8px;top:4.67px;font-size:9.95px;color:#111;letter-spacing:-0.25px;-webkit-text-stroke:0.22px #111">AUS200</div>
<div class="t" style="right:71.2px;top:4.67px;font-size:9.95px;color:#f02020;-webkit-text-stroke:0.18px #f02020">5450.97</div>
<div class="t" style="right:3.6px;top:4.67px;font-size:9.95px;color:#f02020;-webkit-text-stroke:0.18px #f02020">5452.57</div>
<div class="a" style="left:99.8px;top:0;width:1px;height:100%;background:#e4c49c"></div><div class="a" style="left:166.8px;top:0;width:1px;height:100%;background:#e4c49c"></div>
</div>
<div class="a" style="left:4px;top:445.60px;width:236.4px;height:17.56px;background:#deb887;overflow:hidden">
<div class="t" style="left:15.8px;top:4.67px;font-size:9.95px;color:#111;letter-spacing:-0.25px;-webkit-text-stroke:0.22px #111">UK100</div>
<div class="t" style="right:71.2px;top:4.67px;font-size:9.95px;color:#f02020;-webkit-text-stroke:0.18px #f02020">5645.12</div>
<div class="t" style="right:3.6px;top:4.67px;font-size:9.95px;color:#f02020;-webkit-text-stroke:0.18px #f02020">5646.12</div>
<div class="a" style="left:99.8px;top:0;width:1px;height:100%;background:#e4c49c"></div><div class="a" style="left:166.8px;top:0;width:1px;height:100%;background:#e4c49c"></div>
</div>
<div class="a" style="left:4px;top:462.86px;width:236.4px;height:17.56px;background:#deb887;overflow:hidden">
<div class="t" style="left:15.8px;top:4.67px;font-size:9.95px;color:#111;letter-spacing:-0.25px;-webkit-text-stroke:0.22px #111">BTCUSD</div>
<div class="t" style="right:71.2px;top:4.67px;font-size:9.95px;color:#f02020;-webkit-text-stroke:0.18px #f02020">6887.00</div>
<div class="t" style="right:3.6px;top:4.67px;font-size:9.95px;color:#f02020;-webkit-text-stroke:0.18px #f02020">6910.20</div>
<div class="a" style="left:99.8px;top:0;width:1px;height:100%;background:#e4c49c"></div><div class="a" style="left:166.8px;top:0;width:1px;height:100%;background:#e4c49c"></div>
</div>
<div class="a" style="left:4px;top:480.12px;width:236.4px;height:17.56px;background:#deb887;overflow:hidden">
<div class="t" style="left:15.8px;top:4.67px;font-size:9.95px;color:#111;letter-spacing:-0.25px;-webkit-text-stroke:0.22px #111">ETHUSD</div>
<div class="t" style="right:71.2px;top:4.67px;font-size:9.95px;color:#f02020;-webkit-text-stroke:0.18px #f02020">165.15</div>
<div class="t" style="right:3.6px;top:4.67px;font-size:9.95px;color:#f02020;-webkit-text-stroke:0.18px #f02020">165.99</div>
<div class="a" style="left:99.8px;top:0;width:1px;height:100%;background:#e4c49c"></div><div class="a" style="left:166.8px;top:0;width:1px;height:100%;background:#e4c49c"></div>
</div>
<div class="a" style="left:4px;top:497.38px;width:236.4px;height:8.72px;background:#00fa9a;overflow:hidden">
<div class="t" style="left:15.8px;top:4.67px;font-size:9.95px;color:#111;letter-spacing:-0.25px;-webkit-text-stroke:0.22px #111">CHN.ECOMM</div>
<div class="t" style="right:71.2px;top:4.67px;font-size:9.95px;color:#2222e0;-webkit-text-stroke:0.18px #2222e0">2006.66</div>
<div class="t" style="right:3.6px;top:4.67px;font-size:9.95px;color:#2222e0;-webkit-text-stroke:0.18px #2222e0">2011.77</div>
<div class="a" style="left:99.8px;top:0;width:1px;height:100%;background:#3afbb2"></div><div class="a" style="left:166.8px;top:0;width:1px;height:100%;background:#3afbb2"></div>
</div>
<div class="a" style="left:4.00px;top:117.16px;width:236.40px;height:1.00px;background:#dfe9df"></div>
<div class="a" style="left:4.00px;top:134.42px;width:236.40px;height:1.00px;background:#dfe9df"></div>
<div class="a" style="left:4.00px;top:151.68px;width:236.40px;height:1.00px;background:#dfe9df"></div>
<div class="a" style="left:4.00px;top:168.94px;width:236.40px;height:1.00px;background:#dfe9df"></div>
<div class="a" style="left:4.00px;top:186.20px;width:236.40px;height:1.00px;background:#dfe9df"></div>
<div class="a" style="left:4.00px;top:203.46px;width:236.40px;height:1.00px;background:#e6e6e6"></div>
<div class="a" style="left:4.00px;top:220.72px;width:236.40px;height:1.00px;background:#ead3b3"></div>
<div class="a" style="left:4.00px;top:237.98px;width:236.40px;height:1.00px;background:#ead3b3"></div>
<div class="a" style="left:4.00px;top:255.24px;width:236.40px;height:1.00px;background:#ead3b3"></div>
<div class="a" style="left:4.00px;top:272.50px;width:236.40px;height:1.00px;background:#ead3b3"></div>
<div class="a" style="left:4.00px;top:289.76px;width:236.40px;height:1.00px;background:#ead3b3"></div>
<div class="a" style="left:4.00px;top:307.02px;width:236.40px;height:1.00px;background:#dfe9df"></div>
<div class="a" style="left:4.00px;top:324.28px;width:236.40px;height:1.00px;background:#dfe9df"></div>
<div class="a" style="left:4.00px;top:341.54px;width:236.40px;height:1.00px;background:#dfe9df"></div>
<div class="a" style="left:4.00px;top:358.80px;width:236.40px;height:1.00px;background:#dfe9df"></div>
<div class="a" style="left:4.00px;top:376.06px;width:236.40px;height:1.00px;background:#dfe9df"></div>
<div class="a" style="left:4.00px;top:393.32px;width:236.40px;height:1.00px;background:#86fccd"></div>
<div class="a" style="left:4.00px;top:410.58px;width:236.40px;height:1.00px;background:#86fccd"></div>
<div class="a" style="left:4.00px;top:427.84px;width:236.40px;height:1.00px;background:#ead3b3"></div>
<div class="a" style="left:4.00px;top:445.10px;width:236.40px;height:1.00px;background:#ead3b3"></div>
<div class="a" style="left:4.00px;top:462.36px;width:236.40px;height:1.00px;background:#ead3b3"></div>
<div class="a" style="left:4.00px;top:479.62px;width:236.40px;height:1.00px;background:#ead3b3"></div>
<div class="a" style="left:4.00px;top:496.88px;width:236.40px;height:1.00px;background:#ead3b3"></div>
<div class="a" style="left:103.80px;top:80.50px;width:1.00px;height:20.00px;background:#e2e2e6"></div>
<div class="a" style="left:170.80px;top:80.50px;width:1.00px;height:20.00px;background:#e2e2e6"></div>
<div class="a" style="left:0;top:0;width:257px;height:505.8px;overflow:hidden"><svg width="1024" height="531" viewBox="0 0 1024 531">
<path d="M11.4 105.93l4 4h-2.1v3.2h-3.8v-3.2h-2.1z" fill="#35c435" stroke="#15921a" stroke-width="0.9" stroke-linejoin="round"/><path d="M11.4 107.63l1.7 1.9h-.9v2.6h-1.6v-2.6h-.9z" fill="#c9f5c4"/>
<path d="M11.4 123.19l4 4h-2.1v3.2h-3.8v-3.2h-2.1z" fill="#35c435" stroke="#15921a" stroke-width="0.9" stroke-linejoin="round"/><path d="M11.4 124.89l1.7 1.9h-.9v2.6h-1.6v-2.6h-.9z" fill="#c9f5c4"/>
<path d="M11.4 140.45l4 4h-2.1v3.2h-3.8v-3.2h-2.1z" fill="#35c435" stroke="#15921a" stroke-width="0.9" stroke-linejoin="round"/><path d="M11.4 142.15l1.7 1.9h-.9v2.6h-1.6v-2.6h-.9z" fill="#c9f5c4"/>
<path d="M11.4 157.71l4 4h-2.1v3.2h-3.8v-3.2h-2.1z" fill="#35c435" stroke="#15921a" stroke-width="0.9" stroke-linejoin="round"/><path d="M11.4 159.41l1.7 1.9h-.9v2.6h-1.6v-2.6h-.9z" fill="#c9f5c4"/>
<path d="M11.4 174.97l4 4h-2.1v3.2h-3.8v-3.2h-2.1z" fill="#35c435" stroke="#15921a" stroke-width="0.9" stroke-linejoin="round"/><path d="M11.4 176.67l1.7 1.9h-.9v2.6h-1.6v-2.6h-.9z" fill="#c9f5c4"/>
<path d="M11.4 199.63l4-4h-2.1v-3.2h-3.8v3.2h-2.1z" fill="#f2622c" stroke="#c43c14" stroke-width="0.9" stroke-linejoin="round"/><path d="M11.4 197.73l1.7-1.9h-.9v-2.6h-1.6v2.6h-.9z" fill="#ffd9c4"/>
<path d="M11.4 216.89l4-4h-2.1v-3.2h-3.8v3.2h-2.1z" fill="#f2622c" stroke="#c43c14" stroke-width="0.9" stroke-linejoin="round"/><path d="M11.4 214.99l1.7-1.9h-.9v-2.6h-1.6v2.6h-.9z" fill="#ffd9c4"/>
<path d="M11.4 226.75l4 4h-2.1v3.2h-3.8v-3.2h-2.1z" fill="#35c435" stroke="#15921a" stroke-width="0.9" stroke-linejoin="round"/><path d="M11.4 228.45l1.7 1.9h-.9v2.6h-1.6v-2.6h-.9z" fill="#c9f5c4"/>
<path d="M11.4 244.01l4 4h-2.1v3.2h-3.8v-3.2h-2.1z" fill="#35c435" stroke="#15921a" stroke-width="0.9" stroke-linejoin="round"/><path d="M11.4 245.71l1.7 1.9h-.9v2.6h-1.6v-2.6h-.9z" fill="#c9f5c4"/>
<path d="M11.4 261.27l4 4h-2.1v3.2h-3.8v-3.2h-2.1z" fill="#35c435" stroke="#15921a" stroke-width="0.9" stroke-linejoin="round"/><path d="M11.4 262.97l1.7 1.9h-.9v2.6h-1.6v-2.6h-.9z" fill="#c9f5c4"/>
<path d="M11.4 285.93l4-4h-2.1v-3.2h-3.8v3.2h-2.1z" fill="#f2622c" stroke="#c43c14" stroke-width="0.9" stroke-linejoin="round"/><path d="M11.4 284.03l1.7-1.9h-.9v-2.6h-1.6v2.6h-.9z" fill="#ffd9c4"/>
<path d="M11.4 303.19l4-4h-2.1v-3.2h-3.8v3.2h-2.1z" fill="#f2622c" stroke="#c43c14" stroke-width="0.9" stroke-linejoin="round"/><path d="M11.4 301.29l1.7-1.9h-.9v-2.6h-1.6v2.6h-.9z" fill="#ffd9c4"/>
<path d="M11.4 320.45l4-4h-2.1v-3.2h-3.8v3.2h-2.1z" fill="#f2622c" stroke="#c43c14" stroke-width="0.9" stroke-linejoin="round"/><path d="M11.4 318.55l1.7-1.9h-.9v-2.6h-1.6v2.6h-.9z" fill="#ffd9c4"/>
<path d="M11.4 330.31l4 4h-2.1v3.2h-3.8v-3.2h-2.1z" fill="#35c435" stroke="#15921a" stroke-width="0.9" stroke-linejoin="round"/><path d="M11.4 332.01l1.7 1.9h-.9v2.6h-1.6v-2.6h-.9z" fill="#c9f5c4"/>
<path d="M11.4 347.57l4 4h-2.1v3.2h-3.8v-3.2h-2.1z" fill="#35c435" stroke="#15921a" stroke-width="0.9" stroke-linejoin="round"/><path d="M11.4 349.27l1.7 1.9h-.9v2.6h-1.6v-2.6h-.9z" fill="#c9f5c4"/>
<path d="M11.4 364.83l4 4h-2.1v3.2h-3.8v-3.2h-2.1z" fill="#35c435" stroke="#15921a" stroke-width="0.9" stroke-linejoin="round"/><path d="M11.4 366.53l1.7 1.9h-.9v2.6h-1.6v-2.6h-.9z" fill="#c9f5c4"/>
<path d="M11.4 382.09l4 4h-2.1v3.2h-3.8v-3.2h-2.1z" fill="#35c435" stroke="#15921a" stroke-width="0.9" stroke-linejoin="round"/><path d="M11.4 383.79l1.7 1.9h-.9v2.6h-1.6v-2.6h-.9z" fill="#c9f5c4"/>
<path d="M11.4 399.35l4 4h-2.1v3.2h-3.8v-3.2h-2.1z" fill="#35c435" stroke="#15921a" stroke-width="0.9" stroke-linejoin="round"/><path d="M11.4 401.05l1.7 1.9h-.9v2.6h-1.6v-2.6h-.9z" fill="#c9f5c4"/>
<path d="M11.4 416.61l4 4h-2.1v3.2h-3.8v-3.2h-2.1z" fill="#35c435" stroke="#15921a" stroke-width="0.9" stroke-linejoin="round"/><path d="M11.4 418.31l1.7 1.9h-.9v2.6h-1.6v-2.6h-.9z" fill="#c9f5c4"/>
<path d="M11.4 441.27l4-4h-2.1v-3.2h-3.8v3.2h-2.1z" fill="#f2622c" stroke="#c43c14" stroke-width="0.9" stroke-linejoin="round"/><path d="M11.4 439.37l1.7-1.9h-.9v-2.6h-1.6v2.6h-.9z" fill="#ffd9c4"/>
<path d="M11.4 458.53l4-4h-2.1v-3.2h-3.8v3.2h-2.1z" fill="#f2622c" stroke="#c43c14" stroke-width="0.9" stroke-linejoin="round"/><path d="M11.4 456.63l1.7-1.9h-.9v-2.6h-1.6v2.6h-.9z" fill="#ffd9c4"/>
<path d="M11.4 475.79l4-4h-2.1v-3.2h-3.8v3.2h-2.1z" fill="#f2622c" stroke="#c43c14" stroke-width="0.9" stroke-linejoin="round"/><path d="M11.4 473.89l1.7-1.9h-.9v-2.6h-1.6v2.6h-.9z" fill="#ffd9c4"/>
<path d="M11.4 493.05l4-4h-2.1v-3.2h-3.8v3.2h-2.1z" fill="#f2622c" stroke="#c43c14" stroke-width="0.9" stroke-linejoin="round"/><path d="M11.4 491.15l1.7-1.9h-.9v-2.6h-1.6v2.6h-.9z" fill="#ffd9c4"/>
<path d="M11.4 502.91l4 4h-2.1v3.2h-3.8v-3.2h-2.1z" fill="#35c435" stroke="#15921a" stroke-width="0.9" stroke-linejoin="round"/><path d="M11.4 504.61l1.7 1.9h-.9v2.6h-1.6v-2.6h-.9z" fill="#c9f5c4"/>
</svg></div>
<div class="a" style="left:240.40px;top:80.50px;width:15.60px;height:425.50px;background:#f0f0f0"></div>
<div class="a" style="left:240.80px;top:95.00px;width:12.20px;height:365.00px;background:linear-gradient(90deg,#c8c8c8 0%,#c9c9c9 85%,#dcdcdc 100%)"></div>
<svg width="1024" height="531" viewBox="0 0 1024 531"><path d="M244 90.4l3.3-3.6 3.3 3.6M244.6 497.4l3.3 3.6 3.3-3.6" stroke="#333" stroke-width="1.3" fill="none"/></svg>
<div class="a" style="left:3.00px;top:505.60px;width:253.00px;height:1.20px;background:#222"></div>
<div class="a" style="left:5.20px;top:505.60px;width:56.40px;height:18.80px;background:#fff;border:1.3px solid #222;border-top:none;border-radius:0 0 2.5px 2.5px"></div>
<div class="t" style="left:13.00px;top:511.22px;font-size:10.2px;color:#111;">Symbols</div>
<div class="t" style="left:70.00px;top:511.22px;font-size:10.2px;color:#9a9a9a;">Tick Chart</div>
<div class="a" style="left:126.00px;top:509.00px;width:1.00px;height:13.00px;background:#8a8a8a"></div>
<div class="a" style="left:0.00px;top:526.40px;width:257.00px;height:1.00px;background:#cfcfcf"></div>
<div class="a" style="left:0.00px;top:527.40px;width:257.00px;height:4.00px;background:#fafafa"></div>
<!-- main chart -->
<div class="a" style="left:257.00px;top:65.50px;width:764.40px;height:1.00px;background:#707070"></div>
<div class="a" style="left:259.00px;top:66.20px;width:762.40px;height:444.30px;background:#000"></div>
<div class="a" style="left:257.00px;top:510.50px;width:764.40px;height:1.00px;background:#5a5a5a"></div>
<div class="a" style="left:257.00px;top:511.50px;width:764.40px;height:1.00px;background:#b0b0b0"></div>
<div class="a" style="left:257.00px;top:512.60px;width:764.00px;height:18.40px;background:#f0f0f0"></div>
<div class="a" style="left:257.00px;top:527.60px;width:764.00px;height:3.40px;background:#f8f8f8"></div>
<div class="a" style="left:257.00px;top:526.80px;width:764.00px;height:0.90px;background:#d2d2d2"></div>
<svg width="1024" height="531" viewBox="0 0 1024 531" shape-rendering="auto">
<path d="M288.25 69.5V494.3M314.61 69.5V494.3M340.96 69.5V494.3M367.32 69.5V494.3M393.67 69.5V494.3M420.02 69.5V494.3M446.38 69.5V494.3M472.73 69.5V494.3M499.09 69.5V494.3M525.44 69.5V494.3M551.79 69.5V494.3M578.15 69.5V494.3M604.50 69.5V494.3M630.86 69.5V494.3M657.21 69.5V494.3M683.56 69.5V494.3M709.92 69.5V494.3M736.27 69.5V494.3M762.63 69.5V494.3M788.98 69.5V494.3M815.33 69.5V494.3M841.69 69.5V494.3M868.04 69.5V494.3M894.40 69.5V494.3M920.75 69.5V494.3M947.10 69.5V494.3M973.46 69.5V494.3" stroke="#a4acb4" stroke-width="1.15" stroke-dasharray="2.4 2.5" fill="none"/>
<path d="M261.6 85.00H984.1M261.6 112.14H984.1M261.6 139.28H984.1M261.6 166.42H984.1M261.6 193.56H984.1M261.6 220.70H984.1M261.6 247.84H984.1M261.6 274.98H984.1M261.6 302.12H984.1M261.6 329.26H984.1M261.6 356.40H984.1M261.6 383.54H984.1M261.6 410.68H984.1M261.6 437.82H984.1M261.6 464.96H984.1M261.6 491.50H984.1" stroke="#a4acb4" stroke-width="1.15" stroke-dasharray="2.4 2.5" fill="none"/>
<path d="M261.6 494.3V69.5H984.1V494.3Z" stroke="#e8e8e8" stroke-width="1" fill="none"/>
<path d="M984.1 85.00h2.4" stroke="#e8e8e8" stroke-width="1"/>
<text x="989.2" y="87.90" font-size="7.9" fill="#f2f2f2" textLength="26.6" lengthAdjust="spacingAndGlyphs">1.11530</text>
<path d="M984.1 112.14h2.4" stroke="#e8e8e8" stroke-width="1"/>
<text x="989.2" y="115.04" font-size="7.9" fill="#f2f2f2" textLength="26.6" lengthAdjust="spacingAndGlyphs">1.11200</text>
<path d="M984.1 139.28h2.4" stroke="#e8e8e8" stroke-width="1"/>
<text x="989.2" y="142.18" font-size="7.9" fill="#f2f2f2" textLength="26.6" lengthAdjust="spacingAndGlyphs">1.10870</text>
<path d="M984.1 166.42h2.4" stroke="#e8e8e8" stroke-width="1"/>
<text x="989.2" y="169.32" font-size="7.9" fill="#f2f2f2" textLength="26.6" lengthAdjust="spacingAndGlyphs">1.10540</text>
<path d="M984.1 193.56h2.4" stroke="#e8e8e8" stroke-width="1"/>
<text x="989.2" y="196.46" font-size="7.9" fill="#f2f2f2" textLength="26.6" lengthAdjust="spacingAndGlyphs">1.10210</text>
<path d="M984.1 220.70h2.4" stroke="#e8e8e8" stroke-width="1"/>
<text x="989.2" y="223.60" font-size="7.9" fill="#f2f2f2" textLength="26.6" lengthAdjust="spacingAndGlyphs">1.09870</text>
<path d="M984.1 247.84h2.4" stroke="#e8e8e8" stroke-width="1"/>
<text x="989.2" y="250.74" font-size="7.9" fill="#f2f2f2" textLength="26.6" lengthAdjust="spacingAndGlyphs">1.09540</text>
<path d="M984.1 274.98h2.4" stroke="#e8e8e8" stroke-width="1"/>
<text x="989.2" y="277.88" font-size="7.9" fill="#f2f2f2" textLength="26.6" lengthAdjust="spacingAndGlyphs">1.09210</text>
<path d="M984.1 302.12h2.4" stroke="#e8e8e8" stroke-width="1"/>
<text x="989.2" y="305.02" font-size="7.9" fill="#f2f2f2" textLength="26.6" lengthAdjust="spacingAndGlyphs">1.08880</text>
<path d="M984.1 329.26h2.4" stroke="#e8e8e8" stroke-width="1"/>
<text x="989.2" y="332.16" font-size="7.9" fill="#f2f2f2" textLength="26.6" lengthAdjust="spacingAndGlyphs">1.08550</text>
<path d="M984.1 356.40h2.4" stroke="#e8e8e8" stroke-width="1"/>
<text x="989.2" y="359.30" font-size="7.9" fill="#f2f2f2" textLength="26.6" lengthAdjust="spacingAndGlyphs">1.08210</text>
<path d="M984.1 383.54h2.4" stroke="#e8e8e8" stroke-width="1"/>
<text x="989.2" y="386.44" font-size="7.9" fill="#f2f2f2" textLength="26.6" lengthAdjust="spacingAndGlyphs">1.07880</text>
<path d="M984.1 410.68h2.4" stroke="#e8e8e8" stroke-width="1"/>
<text x="989.2" y="413.58" font-size="7.9" fill="#f2f2f2" textLength="26.6" lengthAdjust="spacingAndGlyphs">1.07550</text>
<path d="M984.1 437.82h2.4" stroke="#e8e8e8" stroke-width="1"/>
<text x="989.2" y="440.72" font-size="7.9" fill="#f2f2f2" textLength="26.6" lengthAdjust="spacingAndGlyphs">1.07220</text>
<path d="M984.1 464.96h2.4" stroke="#e8e8e8" stroke-width="1"/>
<text x="989.2" y="467.86" font-size="7.9" fill="#f2f2f2" textLength="26.6" lengthAdjust="spacingAndGlyphs">1.06890</text>
<path d="M984.1 491.50h2.4" stroke="#e8e8e8" stroke-width="1"/>
<text x="989.2" y="494.40" font-size="7.9" fill="#f2f2f2" textLength="26.6" lengthAdjust="spacingAndGlyphs">1.06560</text>
<path d="M261.90 494.3v2.4" stroke="#e8e8e8" stroke-width="1"/>
<text x="261.50" y="504.9" font-size="7.9" fill="#f2f2f2" textLength="42.4" lengthAdjust="spacingAndGlyphs">23 Mar 2020</text>
<path d="M314.61 494.3v2.4" stroke="#e8e8e8" stroke-width="1"/>
<text x="314.21" y="504.9" font-size="7.9" fill="#f2f2f2" textLength="44.5" lengthAdjust="spacingAndGlyphs">24 Mar 20:00</text>
<path d="M367.32 494.3v2.4" stroke="#e8e8e8" stroke-width="1"/>
<text x="366.92" y="504.9" font-size="7.9" fill="#f2f2f2" textLength="44.5" lengthAdjust="spacingAndGlyphs">26 Mar 04:00</text>
<path d="M420.02 494.3v2.4" stroke="#e8e8e8" stroke-width="1"/>
<text x="419.62" y="504.9" font-size="7.9" fill="#f2f2f2" textLength="44.5" lengthAdjust="spacingAndGlyphs">27 Mar 12:00</text>
<path d="M472.73 494.3v2.4" stroke="#e8e8e8" stroke-width="1"/>
<text x="472.33" y="504.9" font-size="7.9" fill="#f2f2f2" textLength="44.5" lengthAdjust="spacingAndGlyphs">30 Mar 20:00</text>
<path d="M525.44 494.3v2.4" stroke="#e8e8e8" stroke-width="1"/>
<text x="525.04" y="504.9" font-size="7.9" fill="#f2f2f2" textLength="38.6" lengthAdjust="spacingAndGlyphs">1 Apr 04:00</text>
<path d="M578.15 494.3v2.4" stroke="#e8e8e8" stroke-width="1"/>
<text x="577.75" y="504.9" font-size="7.9" fill="#f2f2f2" textLength="38.6" lengthAdjust="spacingAndGlyphs">2 Apr 12:00</text>
<path d="M630.86 494.3v2.4" stroke="#e8e8e8" stroke-width="1"/>
<text x="630.46" y="504.9" font-size="7.9" fill="#f2f2f2" textLength="38.6" lengthAdjust="spacingAndGlyphs">3 Apr 20:00</text>
<path d="M683.56 494.3v2.4" stroke="#e8e8e8" stroke-width="1"/>
<text x="683.16" y="504.9" font-size="7.9" fill="#f2f2f2" textLength="38.6" lengthAdjust="spacingAndGlyphs">7 Apr 04:00</text>
<path d="M736.27 494.3v2.4" stroke="#e8e8e8" stroke-width="1"/>
<text x="735.87" y="504.9" font-size="7.9" fill="#f2f2f2" textLength="38.6" lengthAdjust="spacingAndGlyphs">8 Apr 12:00</text>
<path d="M788.98 494.3v2.4" stroke="#e8e8e8" stroke-width="1"/>
<text x="788.58" y="504.9" font-size="7.9" fill="#f2f2f2" textLength="38.6" lengthAdjust="spacingAndGlyphs">9 Apr 20:00</text>
<path d="M841.69 494.3v2.4" stroke="#e8e8e8" stroke-width="1"/>
<text x="841.29" y="504.9" font-size="7.9" fill="#f2f2f2" textLength="42.8" lengthAdjust="spacingAndGlyphs">13 Apr 04:00</text>
<path d="M894.40 494.3v2.4" stroke="#e8e8e8" stroke-width="1"/>
<text x="894.00" y="504.9" font-size="7.9" fill="#f2f2f2" textLength="42.8" lengthAdjust="spacingAndGlyphs">14 Apr 12:00</text>
<path d="M947.10 494.3v2.4" stroke="#e8e8e8" stroke-width="1"/>
<text x="946.70" y="504.9" font-size="7.9" fill="#f2f2f2" textLength="42.8" lengthAdjust="spacingAndGlyphs">15 Apr 20:00</text>
<path d="M874.6 270.7V291.0" stroke="#12d012" stroke-width="1.2"/><rect x="872.9" y="273.4" width="3.4" height="13.6" fill="#000" stroke="#1bd81b" stroke-width="1.1"/>
<path d="M881.2 252.8V277.8" stroke="#12d012" stroke-width="1.2"/><rect x="879.5" y="256.0" width="3.4" height="16.6" fill="#000" stroke="#1bd81b" stroke-width="1.1"/>
<path d="M887.8 253.6V280.5" stroke="#12d012" stroke-width="1.2"/><rect x="886.1" y="256.7" width="3.4" height="17.2" fill="#f4fff0" stroke="#7cf07c" stroke-width="0.9"/>
<path d="M894.4 230.3V275.2" stroke="#12d012" stroke-width="1.2"/><rect x="892.7" y="234.3" width="3.4" height="40.1" fill="#000" stroke="#1bd81b" stroke-width="1.1"/>
<path d="M901.0 223.7V247.5" stroke="#12d012" stroke-width="1.2"/><rect x="899.3" y="234.3" width="3.4" height="5.3" fill="#f4fff0" stroke="#7cf07c" stroke-width="0.9"/>
<path d="M907.6 221.0V241.0" stroke="#12d012" stroke-width="1.2"/><rect x="905.9" y="227.0" width="3.4" height="12.6" fill="#000" stroke="#1bd81b" stroke-width="1.1"/>
<path d="M914.2 218.0V229.5" stroke="#12d012" stroke-width="1.2"/><rect x="912.5" y="222.4" width="3.4" height="6.6" fill="#000" stroke="#1bd81b" stroke-width="1.1"/>
<path d="M920.8 219.8V231.7" stroke="#12d012" stroke-width="1.2"/><rect x="919.1" y="222.4" width="3.4" height="8.6" fill="#f4fff0" stroke="#7cf07c" stroke-width="0.9"/>
<path d="M927.4 230.3V275.0" stroke="#12d012" stroke-width="1.2"/><rect x="925.7" y="231.0" width="3.4" height="35.0" fill="#f4fff0" stroke="#7cf07c" stroke-width="0.9"/>
<path d="M934.0 263.3V327.0" stroke="#12d012" stroke-width="1.2"/><rect x="932.3" y="265.4" width="3.4" height="59.9" fill="#f4fff0" stroke="#7cf07c" stroke-width="0.9"/>
<path d="M940.6 267.3V326.0" stroke="#12d012" stroke-width="1.2"/><rect x="938.9" y="278.6" width="3.4" height="46.2" fill="#000" stroke="#1bd81b" stroke-width="1.1"/>
<path d="M947.2 261.2V285.8" stroke="#12d012" stroke-width="1.2"/><rect x="945.5" y="278.6" width="3.4" height="5.8" fill="#f4fff0" stroke="#7cf07c" stroke-width="0.9"/>
<path d="M953.8 283.9V307.7" stroke="#12d012" stroke-width="1.2"/><rect x="952.1" y="285.2" width="3.4" height="18.2" fill="#f4fff0" stroke="#7cf07c" stroke-width="0.9"/>
<path d="M960.3 299.0V321.9" stroke="#12d012" stroke-width="1.2"/><rect x="958.6" y="303.4" width="3.4" height="6.1" fill="#f4fff0" stroke="#7cf07c" stroke-width="0.9"/>
<path d="M966.9 288.4V321.9" stroke="#12d012" stroke-width="1.2"/><rect x="965.2" y="309.0" width="3.4" height="5.0" fill="#f4fff0" stroke="#7cf07c" stroke-width="0.9"/>
<path d="M446.9 113.7V160.0" stroke="#12d012" stroke-width="1.2"/><rect x="445.2" y="125.3" width="3.4" height="18.4" fill="#f4fff0" stroke="#7cf07c" stroke-width="0.9"/>
<path d="M453.2 123.2V160.0" stroke="#12d012" stroke-width="1.2"/><rect x="451.5" y="135.8" width="3.4" height="8.5" fill="#000" stroke="#1bd81b" stroke-width="1.1"/>
<path d="M459.8 132.6V160.0" stroke="#12d012" stroke-width="1.2"/><rect x="458.1" y="135.8" width="3.4" height="24.2" fill="#f4fff0" stroke="#7cf07c" stroke-width="0.9"/>
<path d="M426.8 140.0V160.0" stroke="#12d012" stroke-width="1.2"/><rect x="425.1" y="147.0" width="3.4" height="13.0" fill="#000" stroke="#1bd81b" stroke-width="1.1"/>
<path d="M433.6 140.0V160.0" stroke="#12d012" stroke-width="1.2"/><rect x="431.9" y="146.5" width="3.4" height="13.5" fill="#000" stroke="#1bd81b" stroke-width="1.1"/>
<path d="M406.5 140.2V160.0" stroke="#12d012" stroke-width="1.2"/><rect x="404.8" y="170.0" width="3.4" height="5.0" fill="#000" stroke="#1bd81b" stroke-width="1.1"/>
<path d="M262 160V486" stroke="#12d012" stroke-width="1.2"/>
<path d="M868 268 L872.7 267.3 L881 266 L894.4 264.1 L907.6 260.2 L916 257.4 L920.8 256.4 L925 257 L934 260.7 L947.2 262.8 L957.7 265.4 L966.2 269.1" stroke="#e01818" stroke-width="1.1" fill="none"/>
<path d="M261.6 314.3H987.1" stroke="#8e9aa6" stroke-width="1"/>
<rect x="986" y="310" width="33.2" height="8.9" fill="#fbfbfb"/>
<text x="989.2" y="317.4" font-size="7.9" fill="#000" textLength="26.6" lengthAdjust="spacingAndGlyphs">1.08723</text>
<path d="M264 78.6l2.8-3.4 2.8 3.4z" fill="#f0f0f0"/>
<text x="274.2" y="79.4" font-size="7.9" fill="#f4f4f4" textLength="165" lengthAdjust="spacingAndGlyphs" xml:space="preserve" style="white-space:pre">EURUSD,H4  1.08788 1.09045 1.08641 1.08723</text>
</svg>
<!-- one click trading -->
<div class="a" style="left:262.60px;top:83.40px;width:183.60px;height:57.40px;background:#000"></div>
<div class="a" style="left:263.60px;top:85.40px;width:181.80px;height:52.60px;background:#06063e"></div>
<div class="a" style="left:264.20px;top:86.00px;width:44.00px;height:18.40px;background:linear-gradient(180deg,#4040ee,#3232e2)"></div>
<div class="a" style="left:264.20px;top:105.40px;width:89.20px;height:32.20px;background:linear-gradient(180deg,#3434ee 0%,#2424de 45%,#1414b6 100%)"></div>
<div class="a" style="left:401.80px;top:86.00px;width:43.00px;height:18.40px;background:linear-gradient(180deg,#4040ee,#3232e2)"></div>
<div class="a" style="left:355.80px;top:105.40px;width:89.00px;height:32.20px;background:linear-gradient(180deg,#3434ee 0%,#2424de 45%,#1414b6 100%)"></div>
<div class="a" style="left:266.00px;top:104.20px;width:41.00px;height:1.00px;background:#6a6af0"></div>
<div class="a" style="left:403.60px;top:104.20px;width:40.00px;height:1.00px;background:#6a6af0"></div>
<div class="a" style="left:309.00px;top:85.60px;width:90.60px;height:17.40px;background:#fff"></div>
<div class="a" style="left:309.00px;top:85.60px;width:17.00px;height:17.40px;background:#e6e6e6;border-right:1px solid #c4c4c4"></div>
<div class="a" style="left:382.60px;top:85.60px;width:17.00px;height:17.40px;background:#e6e6e6;border-left:1px solid #c4c4c4"></div>
<svg width="1024" height="531" viewBox="0 0 1024 531"><path d="M315.4 93.4h4.4l-2.2 2.6zM389 95.6h4.4l-2.2-2.6z" fill="#111"/></svg>
<div class="t" style="right:644.00px;top:89.22px;font-size:10.6px;color:#222;">1.00</div>
<div class="t" style="left:135.10px;width:300px;text-align:center;top:90.56px;font-size:9.9px;color:#dcdcff;letter-spacing:-0.5px">SELL</div>
<div class="t" style="left:272.70px;width:300px;text-align:center;top:90.56px;font-size:9.9px;color:#dcdcff;letter-spacing:-0.5px">BUY</div>
<div class="t" style="left:280.80px;top:123.22px;font-size:10.2px;color:#fff;font-weight:bold">1.08</div><div class="t" style="left:302.80px;top:107.22px;font-size:27.4px;color:#fff;letter-spacing:-0.6px">72</div><div class="t" style="left:336.00px;top:110.11px;font-size:10px;color:#fff;font-weight:bold">3</div>
<div class="t" style="left:371.60px;top:123.22px;font-size:10.2px;color:#fff;font-weight:bold">1.08</div><div class="t" style="left:393.60px;top:107.22px;font-size:27.4px;color:#fff;letter-spacing:-0.6px">73</div><div class="t" style="left:426.80px;top:110.11px;font-size:10px;color:#fff;font-weight:bold">4</div>
<div class="a" style="left:262.40px;top:511.40px;width:75.80px;height:17.00px;background:#fff;border:1.3px solid #222;border-top:none;border-radius:0 0 2px 2px"></div>
<div class="t" style="left:272.80px;top:517.81px;font-size:9.6px;color:#000;">EURUSD,H4</div>
<div class="t" style="left:347.40px;top:517.81px;font-size:9.6px;color:#7a7a7a;">GER30,H4</div>
<div class="t" style="left:413.60px;top:517.81px;font-size:9.6px;color:#7a7a7a;">XAUUSD,H4</div>
<div class="t" style="left:488.20px;top:517.81px;font-size:9.6px;color:#7a7a7a;">USOil,H4</div>
<div class="a" style="left:404.20px;top:514.80px;width:1.00px;height:11.60px;background:#8a8a8a"></div>
<div class="a" style="left:480.20px;top:514.80px;width:1.00px;height:11.60px;background:#8a8a8a"></div>
<div class="a" style="left:539.20px;top:514.80px;width:1.00px;height:11.60px;background:#8a8a8a"></div>
<div class="a" style="left:257.00px;top:513.40px;width:5.60px;height:1.00px;background:#555"></div>
<svg width="1024" height="531" viewBox="0 0 1024 531"><path d="M999.4 517.6v5l-3-2.5zM1012 517.6v5l3-2.5z" fill="#9a9a9a"/></svg>
<!-- order dialog -->
<div class="a" style="left:251.40px;top:152.40px;width:620.20px;height:312.00px;background:#fdfdfd;box-shadow:0 0 0 0.6px rgba(120,120,120,0.5),0 2px 9px rgba(0,0,0,0.5)"></div>
<div class="a" style="left:253.60px;top:177.40px;width:615.80px;height:284.80px;background:#f0f0f0"></div>
<div class="a" style="left:251.40px;top:152.40px;width:620.20px;height:25.20px;background:#fff"></div>
<div class="t d" style="left:258.80px;top:159.58px;font-size:10.9px;color:#111;">Order</div>
<svg width="1024" height="531" viewBox="0 0 1024 531">
<path d="M773 164.4h8.4" stroke="#222" stroke-width="1.2"/>
<rect x="811.4" y="160.4" width="7.4" height="7.4" fill="none" stroke="#cfcfcf" stroke-width="1"/>
<path d="M848.8 160.2l8 8M856.8 160.2l-8 8" stroke="#111" stroke-width="1.1"/>
</svg>
<div class="a" style="left:258.40px;top:188.40px;width:246.00px;height:268.00px;background:#fff;border-top:1.2px solid #8e8e8e;border-left:1.2px solid #8e8e8e;border-right:1px solid #e8e8e8;border-bottom:1px solid #e8e8e8"></div>
<svg width="1024" height="531" viewBox="0 0 1024 531">
<path d="M289.30 191.9V454.2M315.70 191.9V454.2M342.10 191.9V454.2M368.50 191.9V454.2M394.90 191.9V454.2M421.30 191.9V454.2M447.70 191.9V454.2M261.8 216.70H467.8M261.8 242.90H467.8M261.8 269.10H467.8M261.8 295.30H467.8M261.8 321.50H467.8M261.8 347.70H467.8M261.8 373.90H467.8M261.8 400.10H467.8M261.8 426.30H467.8" stroke="#d2d2d2" stroke-width="1" stroke-dasharray="2.4 2.6" fill="none"/>
<path d="M262.7 254.0 L264.6 258.7 L268.0 240.8 L269.9 239.5 L271.2 254.0 L273.8 273.8 L275.9 281.7 L277.8 272.4 L281.2 251.3 L284.4 250.0 L287.0 248.7 L289.1 235.5 L291.0 214.4 L292.3 207.0 L296.3 206.5 L298.1 214.4 L300.2 240.8 L301.5 252.6 L303.4 250.0 L305.5 252.6 L306.8 249.2 L309.5 257.9 L311.6 255.3 L313.4 263.2 L314.7 275.0 L316.6 293.5 L318.2 282.5 L324.0 282.5 L326.1 294.9 L327.9 290.9 L330.6 297.5 L331.9 300.6 L334.0 316.4 L335.0 338.8 L337.2 329.6 L339.8 313.7 L343.1 312.2 L345.5 313.9 L348.2 302.0 L350.9 317.3 L353.9 342.7 L356.6 337.6 L359.0 344.4 L361.7 342.7 L364.4 334.2 L366.8 344.4 L370.2 330.8 L372.9 342.7 L377.0 341.0 L379.4 352.9 L381.4 341.0 L383.8 327.5 L387.2 335.9 L389.5 330.8 L392.2 320.7 L394.9 310.5 L397.3 296.9 L404.1 296.3 L405.8 302.0 L407.5 330.8 L410.9 330.8 L412.6 347.8 L415.3 381.7 L417.0 369.8 L419.4 368.1 L421.4 354.6 L467.8 354.6" stroke="#ec5a5a" stroke-width="1" fill="none" stroke-linejoin="round"/>
<path d="M262.7 316.4 L264.6 319.0 L266.4 313.7 L268.6 297.9 L269.9 303.2 L271.2 319.0 L273.3 337.5 L274.6 336.2 L275.9 342.8 L277.8 329.6 L280.4 308.5 L282.3 315.1 L284.4 309.8 L287.0 307.2 L289.1 294.5 L291.0 269.8 L292.8 259.2 L294.9 264.5 L297.6 272.4 L299.7 293.5 L300.7 315.1 L302.9 308.5 L305.5 307.9 L308.1 312.4 L310.8 317.7 L312.1 324.3 L313.4 317.7 L314.7 332.2 L316.6 353.3 L318.2 345.4 L321.3 346.7 L323.2 340.1 L325.3 353.3 L327.1 350.7 L329.2 359.9 L331.9 365.2 L334.0 379.7 L335.0 396.9 L337.2 385.0 L339.8 375.8 L342.4 377.1 L345.1 375.8 L348.5 365.2 L350.3 377.1 L352.2 379.7 L354.3 395.5 L356.6 391.9 L360.0 405.4 L363.4 398.6 L366.8 400.3 L370.2 383.4 L373.6 403.7 L377.0 398.6 L379.4 409.8 L382.1 398.6 L383.8 383.4 L387.2 393.6 L389.5 395.3 L392.2 381.7 L394.9 366.4 L397.3 358.0 L400.7 355.3 L404.1 359.7 L406.8 371.5 L408.5 388.5 L410.9 390.2 L412.6 405.4 L413.6 425.8 L415.3 439.3 L417.0 427.5 L419.4 415.6 L421.4 407.1 L467.8 407.1" stroke="#1f5fe0" stroke-width="1.1" fill="none" stroke-linejoin="round"/>
<path d="M261.8 191.9H467.8V454.2H261.8Z" stroke="#222" stroke-width="1.1" fill="none"/>
<text x="264.4" y="201.4" font-size="7.8" fill="#000">EURUSD</text>
<path d="M467.8 216.70h2" stroke="#222" stroke-width="1"/>
<text x="472.6" y="219.50" font-size="7.6" fill="#111" textLength="26.8" lengthAdjust="spacingAndGlyphs">1.08763</text>
<path d="M467.8 242.90h2" stroke="#222" stroke-width="1"/>
<text x="472.6" y="245.70" font-size="7.6" fill="#111" textLength="26.8" lengthAdjust="spacingAndGlyphs">1.08757</text>
<path d="M467.8 269.10h2" stroke="#222" stroke-width="1"/>
<text x="472.6" y="271.90" font-size="7.6" fill="#111" textLength="26.8" lengthAdjust="spacingAndGlyphs">1.08752</text>
<path d="M467.8 295.30h2" stroke="#222" stroke-width="1"/>
<text x="472.6" y="298.10" font-size="7.6" fill="#111" textLength="26.8" lengthAdjust="spacingAndGlyphs">1.08746</text>
<path d="M467.8 321.50h2" stroke="#222" stroke-width="1"/>
<text x="472.6" y="324.30" font-size="7.6" fill="#111" textLength="26.8" lengthAdjust="spacingAndGlyphs">1.08741</text>
<path d="M467.8 347.70h2" stroke="#222" stroke-width="1"/>
<text x="472.6" y="350.50" font-size="7.6" fill="#111" textLength="26.8" lengthAdjust="spacingAndGlyphs">1.08735</text>
<path d="M467.8 373.90h2" stroke="#222" stroke-width="1"/>
<text x="472.6" y="376.70" font-size="7.6" fill="#111" textLength="26.8" lengthAdjust="spacingAndGlyphs">1.08729</text>
<path d="M467.8 400.10h2" stroke="#222" stroke-width="1"/>
<text x="472.6" y="402.90" font-size="7.6" fill="#111" textLength="26.8" lengthAdjust="spacingAndGlyphs">1.08724</text>
<path d="M467.8 426.30h2" stroke="#222" stroke-width="1"/>
<text x="472.6" y="429.10" font-size="7.6" fill="#111" textLength="26.8" lengthAdjust="spacingAndGlyphs">1.08718</text>
<path d="M467.8 452.20h2" stroke="#222" stroke-width="1"/>
<text x="472.6" y="455.00" font-size="7.6" fill="#111" textLength="26.8" lengthAdjust="spacingAndGlyphs">1.08713</text>
<rect x="468.6" y="349.4" width="33.6" height="10.4" fill="#f06a6a"/><text x="472.6" y="357.5" font-size="7.6" fill="#fff" textLength="26.8" lengthAdjust="spacingAndGlyphs">1.08734</text>
<rect x="468.6" y="401.8" width="33.6" height="10.4" fill="#1c68e4"/><text x="472.6" y="409.9" font-size="7.6" fill="#fff" textLength="26.8" lengthAdjust="spacingAndGlyphs">1.08723</text>
</svg>
<div class="t" style="right:439.20px;top:192.95px;font-size:8.9px;color:#111;-webkit-text-stroke:0.15px #111">Symbol:</div>
<div class="t" style="right:439.20px;top:213.95px;font-size:8.9px;color:#111;-webkit-text-stroke:0.15px #111">Volume:</div>
<div class="t" style="right:439.20px;top:235.15px;font-size:8.9px;color:#111;-webkit-text-stroke:0.15px #111">Stop Loss:</div>
<div class="t" style="right:439.20px;top:256.35px;font-size:8.9px;color:#111;-webkit-text-stroke:0.15px #111">Comment:</div>
<div class="t" style="right:439.20px;top:278.35px;font-size:8.9px;color:#111;-webkit-text-stroke:0.15px #111">Type:</div>
<div class="t" style="right:260.40px;top:235.15px;font-size:8.9px;color:#111;-webkit-text-stroke:0.15px #111">Take Profit:</div>
<div class="a" style="left:592.00px;top:188.20px;width:265.40px;height:17.40px;background:#e5f1fb;border:1px solid #3c8cdc"></div>
<div class="a" style="left:593.60px;top:189.80px;width:247.00px;height:14.20px;border:1px dotted #555"></div>
<div class="t" style="left:594.60px;top:193.20px;font-size:8.4px;color:#000;letter-spacing:-0.12px;-webkit-text-stroke:0.15px #000">EURUSD, Euro vs US Dollar</div>
<div class="a" style="left:592.00px;top:209.40px;width:86.00px;height:17.40px;background:#fff;border:1px solid #8f8f8f"></div>
<div class="t d" style="left:595.60px;top:213.65px;font-size:8.9px;color:#000;">1.00</div>
<div class="a" style="left:592.00px;top:230.80px;width:86.00px;height:16.60px;background:#fff;border:1px solid #bdbdbd;border-top-color:#7e7e7e;border-left-color:#8a8a8a"></div><div class="a" style="left:664.00px;top:231.80px;width:13.00px;height:14.60px;background:#f0f0f0"></div><div class="a" style="left:664.60px;top:232.00px;width:11.80px;height:6.60px;background:#ececec;border:1px solid #cfcfcf"></div><div class="a" style="left:664.60px;top:239.60px;width:11.80px;height:6.60px;background:#ececec;border:1px solid #cfcfcf"></div><div class="t d" style="right:364.40px;top:235.15px;font-size:8.9px;color:#000;">0.00000</div><svg width="1024" height="531" viewBox="0 0 1024 531"><path d="M668.1 236.8h4.8l-2.4-2.6zM668.1 241.4h4.8l-2.4 2.6z" fill="#222"/></svg>
<div class="a" style="left:770.60px;top:230.80px;width:86.00px;height:16.60px;background:#fff;border:1px solid #bdbdbd;border-top-color:#7e7e7e;border-left-color:#8a8a8a"></div><div class="a" style="left:842.60px;top:231.80px;width:13.00px;height:14.60px;background:#f0f0f0"></div><div class="a" style="left:843.20px;top:232.00px;width:11.80px;height:6.60px;background:#ececec;border:1px solid #cfcfcf"></div><div class="a" style="left:843.20px;top:239.60px;width:11.80px;height:6.60px;background:#ececec;border:1px solid #cfcfcf"></div><div class="t d" style="right:185.80px;top:235.15px;font-size:8.9px;color:#000;">0.00000</div><svg width="1024" height="531" viewBox="0 0 1024 531"><path d="M846.7 236.8h4.8l-2.4-2.6zM846.7 241.4h4.8l-2.4 2.6z" fill="#222"/></svg>
<div class="a" style="left:592.00px;top:252.40px;width:265.40px;height:16.60px;background:#fff;border:1px solid #8f8f8f"></div>
<div class="a" style="left:592.00px;top:274.20px;width:265.40px;height:16.40px;background:#e2e2e2;border:1px solid #b0b0b0"></div>
<div class="t d" style="left:595.00px;top:278.05px;font-size:8.9px;color:#000;">Instant Execution</div>
<svg width="1024" height="531" viewBox="0 0 1024 531"><path d="M846.8 196.0l3.2 3.2 3.2-3.2" stroke="#444" stroke-width="1" fill="none"/><path d="M666.8 216.8l3.2 3.2 3.2-3.2" stroke="#444" stroke-width="1" fill="none"/><path d="M846.8 281.2l3.2 3.2 3.2-3.2" stroke="#444" stroke-width="1" fill="none"/></svg>
<div class="a" style="left:511.00px;top:303.00px;width:351.60px;height:153.40px;border:1px solid #d9d9d9;box-shadow:1px 1px 0 #fbfbfb,inset 1px 1px 0 #fbfbfb"></div>
<div class="a" style="left:515.60px;top:298.00px;width:74.60px;height:10.00px;background:#f0f0f0"></div>
<div class="t d" style="left:517.60px;top:298.93px;font-size:9.15px;color:#111;">Instant Execution</div>
<div class="t" style="left:537px;width:300px;text-align:center;top:324.32px;font-size:22.3px;line-height:1;color:#000">1.0872<span style="font-size:16.6px">3</span> / 1.0873<span style="font-size:16.6px">4</span></div>
<div class="a" style="left:523.40px;top:358.00px;width:154.40px;height:18.00px;background:#e4e4e4;border:1px solid #c4c4c4"></div>
<div class="a" style="left:524.60px;top:359.20px;width:152.00px;height:15.60px;background:#fb8282"></div>
<div class="a" style="left:696.60px;top:358.00px;width:154.40px;height:18.00px;background:#e4e4e4;border:1px solid #c4c4c4"></div>
<div class="a" style="left:697.80px;top:359.20px;width:152.00px;height:15.60px;background:#a2c2fb"></div>
<div class="t d" style="left:450.60px;width:300px;text-align:center;top:362.85px;font-size:8.9px;color:#000;">Sell</div>
<div class="t d" style="left:623.60px;width:300px;text-align:center;top:362.85px;font-size:8.9px;color:#000;">Buy</div>
<div class="a" style="left:524.20px;top:382.00px;width:326.00px;height:17.60px;background:#c9c9c9"></div>
<div class="a" style="left:523.40px;top:412.40px;width:10.00px;height:10.00px;background:#fff;border:1px solid #333"></div>
<div class="t d" style="left:536.00px;top:413.91px;font-size:8.78px;color:#111;">Enable maximum deviation from quoted price</div>
<div class="t d" style="left:612.00px;top:435.71px;font-size:8.78px;color:#111;">Maximum deviation:</div>
<div class="a" style="left:699.40px;top:431.40px;width:48.00px;height:16.60px;background:#f4f4f4;border:1px solid #d4d4d4"></div>
<div class="t d" style="left:703.00px;top:435.65px;font-size:8.9px;color:#9a9a9a;">0</div>
<div class="t d" style="left:752.00px;top:435.65px;font-size:8.9px;color:#111;">pips</div>
<svg width="1024" height="531" viewBox="0 0 1024 531"><path d="M737.4 438.59999999999997l3.2 3.2 3.2-3.2" stroke="#9a9a9a" stroke-width="1" fill="none"/></svg>
</div>
</body></html>
